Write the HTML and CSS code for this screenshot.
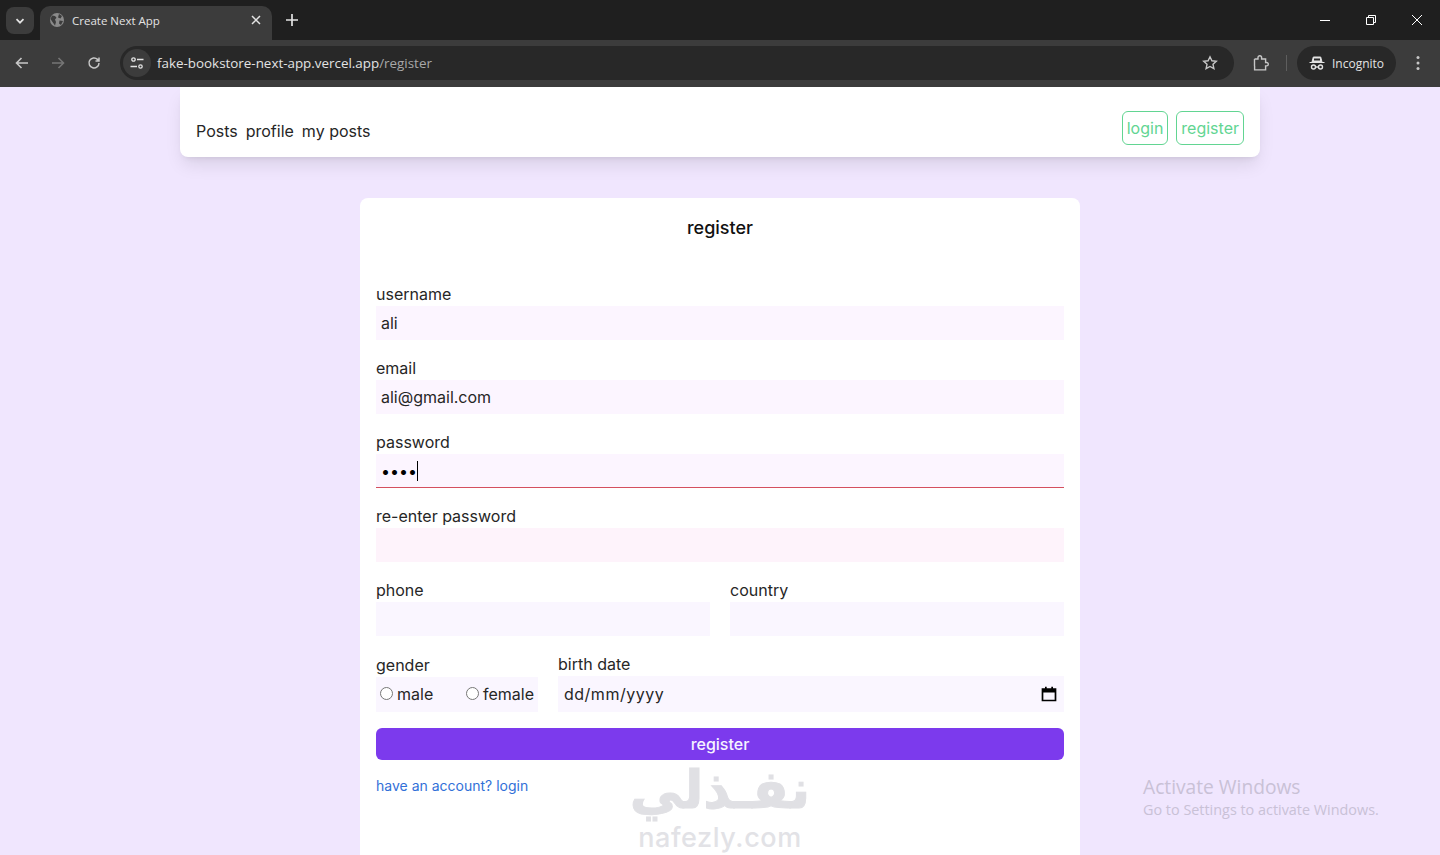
FILE: index.html
```html
<!DOCTYPE html>
<html lang="en">
<head>
  <meta charset="UTF-8">
  <meta name="viewport" content="width=device-width, initial-scale=1.0">
  <title>Create Next App</title>
  <link rel="stylesheet" href="styles.css">
</head>
<body>
  <!-- browser window top -->
  <div class="tabstrip">
    <div class="tab-search">
      <svg width="12" height="12" viewBox="0 0 12 12"><path d="M2.500 4.200 6 7.700l3.500-3.500" fill="none" stroke="#e3e3e3" stroke-width="1.700"/></svg>
    </div>
    <div class="tab">
      <svg class="tab-globe" width="16" height="16" viewBox="0 0 16 16"><circle cx="8" cy="8" r="7" fill="#8a8a8a"/><path d="M3 3.500 6 4l1.500 1.800L6 7.500 7 10l-1 3.500L3.500 10 1.500 7zM10 2l3 2-1.500 2.500-2.500-1zM10.500 8.500l3.500.5-2 4-2-1.500z" fill="#3c3c3c"/></svg>
      <span class="tab-title">Create Next App</span>
      <svg class="tab-close" width="10" height="10" viewBox="0 0 10 10"><path d="M1 1l8 8M9 1 1 9" stroke="#e3e3e3" stroke-width="1.500"/></svg>
    </div>
    <svg class="new-tab" width="14" height="14" viewBox="0 0 14 14"><path d="M7 1v12M1 7h12" stroke="#e3e3e3" stroke-width="1.700"/></svg>
    <div class="win-btns">
      <svg width="12" height="12" viewBox="0 0 12 12"><path d="M1 6.500h10" stroke="#fff" stroke-width="1"/></svg>
      <svg width="12" height="12" viewBox="0 0 12 12"><path d="M1.500 3.500h7v7h-7zM3.500 3.500v-2h7v7h-2" fill="none" stroke="#fff" stroke-width="1"/></svg>
      <svg width="12" height="12" viewBox="0 0 12 12"><path d="M1 1l10 10M11 1 1 11" stroke="#fff" stroke-width="1"/></svg>
    </div>
  </div>
  <div class="toolbar">
    <svg class="tool" width="16" height="16" viewBox="0 0 16 16"><path d="M14 8H3M7.500 3 2.500 8l5 5" fill="none" stroke="#c7c7c7" stroke-width="1.600"/></svg>
    <svg class="tool" width="16" height="16" viewBox="0 0 16 16"><path d="M2 8h11M8.500 3l5 5-5 5" fill="none" stroke="#757575" stroke-width="1.600"/></svg>
    <svg class="tool" width="16" height="16" viewBox="0 0 16 16"><path d="M13 8a5 5 0 1 1-1.500-3.600L13 6M13 2.500V6H9.500" fill="none" stroke="#c7c7c7" stroke-width="1.500"/></svg>
    <div class="omnibox">
      <div class="site-btn">
        <svg width="16" height="16" viewBox="0 0 16 16"><g fill="none" stroke="#e3e3e3" stroke-width="1.300"><circle cx="4.500" cy="4.500" r="1.700"/><circle cx="11.500" cy="11.500" r="1.700"/><path d="M8 4.500h6.500M1.500 11.500H8"/></g></svg>
      </div>
      <span class="url">fake-bookstore-next-app.vercel.app<span class="url-path">/register</span></span>
      <svg class="star" width="16" height="16" viewBox="0 0 16 16"><path d="m8 1.800 1.900 4 4.400.5-3.300 3 .9 4.400L8 11.500l-3.900 2.200.9-4.400-3.300-3 4.400-.5z" fill="none" stroke="#c7c7c7" stroke-width="1.400"/></svg>
    </div>
    <svg class="puzzle" width="18" height="18" viewBox="0 0 18 18"><path d="M2.500 5H6V3.500a1.800 1.800 0 0 1 3.600 0V5h4v3.500h1a1.700 1.700 0 0 1 0 3.400h-1v4h-11v-4" fill="none" stroke="#c7c7c7" stroke-width="1.400"/><path d="M2.500 5v7" stroke="#c7c7c7" stroke-width="1.400"/></svg>
    <div class="tool-sep"></div>
    <div class="incognito">
      <svg width="16" height="16" viewBox="0 0 16 16"><path d="M0.500 7.500h15M3 7l1.300-5h7.400L13 7z" fill="#e3e3e3" stroke="#e3e3e3" stroke-width="1"/><path d="M5 3.500h6v2H5z" fill="#282828"/><g fill="none" stroke="#e3e3e3" stroke-width="1.400"><circle cx="4.500" cy="12" r="2"/><circle cx="11.500" cy="12" r="2"/><path d="M6.500 12h3"/></g></svg>
      <span>Incognito</span>
    </div>
    <svg class="dots" width="4" height="16" viewBox="0 0 4 16"><circle cx="2" cy="2.500" r="1.500" fill="#c7c7c7"/><circle cx="2" cy="8" r="1.500" fill="#c7c7c7"/><circle cx="2" cy="13.500" r="1.500" fill="#c7c7c7"/></svg>
  </div>

  <!-- the site -->
  <div class="page">
    <nav class="navbar">
      <div class="nav-links">
        <a href="#">Posts</a>
        <a href="#">profile</a>
        <a href="#">my posts</a>
      </div>
      <div class="nav-auth">
        <a class="auth-btn" href="#">login</a>
        <a class="auth-btn" href="#">register</a>
      </div>
    </nav>

    <form class="register-card">
      <h1>register</h1>

      <div class="form-group">
        <label for="username">username</label>
        <input id="username" class="bg-fuchsia" type="text" value="ali">
      </div>
      <div class="form-group">
        <label for="email">email</label>
        <input id="email" class="bg-fuchsia" type="text" value="ali@gmail.com">
      </div>
      <div class="form-group">
        <label for="password">password</label>
        <div class="password-wrap">
          <input id="password" class="bg-fuchsia" type="password" value="1234">
          <span class="caret"></span>
        </div>
      </div>
      <div class="form-group">
        <label for="repassword">re-enter password</label>
        <input id="repassword" class="bg-pink" type="password">
      </div>

      <div class="form-row">
        <div class="form-group">
          <label for="phone">phone</label>
          <input id="phone" class="bg-purple" type="text">
        </div>
        <div class="form-group">
          <label for="country">country</label>
          <input id="country" class="bg-purple" type="text">
        </div>
      </div>

      <div class="form-row bottom-row">
        <div class="gender-col">
          <span class="gender-label">gender</span>
          <div class="gender-box">
            <label class="radio"><input type="radio" name="gender"> male</label>
            <label class="radio"><input type="radio" name="gender"> female</label>
          </div>
        </div>
        <div class="birth-col">
          <span class="birth-label">birth date</span>
          <div class="date-input">
            <span>dd/mm/yyyy</span>
            <svg width="16" height="16" viewBox="0 0 16 16"><path d="M1.500 3h13v11.500h-13z" fill="none" stroke="#000" stroke-width="1.700"/><path d="M1.500 3h13v3.500h-13zM4 .8h1.700V3H4zM10.300.8H12V3h-1.700z" fill="#000"/></svg>
          </div>
        </div>
      </div>

      <button class="submit-btn" type="button">register</button>
      <a class="login-link" href="#">have an account? login</a>
    </form>
  </div>

  <!-- things sitting on top of the picture -->
  <div class="watermark">
    <div class="watermark-ar" lang="ar" dir="rtl">نفـذلي</div>
    <div class="watermark-en">nafezly.com</div>
  </div>
  <div class="activate">
    <div class="activate-title">Activate Windows</div>
    <div class="activate-sub">Go to Settings to activate Windows.</div>
  </div>
</body>
</html>
```

FILE: styles.css
```css
* {
  box-sizing: border-box;
}
html, body {
  height: 855px;
  overflow: hidden;
}
body {
  margin: 0;
  font-family: Inter, "Liberation Sans", sans-serif;
  font-size: 16px;
  color: #1f2937;
  background-color: #f0e6fe;
}
a {
  color: inherit;
  text-decoration: none;
}

/* browser */
.tabstrip {
  height: 40px;
  background-color: #1f1f1f;
  display: flex;
  align-items: flex-end;
  font-family: "Open Sans", "Liberation Sans", sans-serif;
}
.tab-search {
  width: 28px;
  height: 27px;
  margin: 0 6px 6px 6px;
  border-radius: 8px;
  background-color: #3c3c3c;
  display: flex;
  align-items: center;
  justify-content: center;
}
.tab {
  width: 232px;
  height: 34px;
  background-color: #3c3c3c;
  border-radius: 10px 10px 0 0;
  display: flex;
  align-items: center;
  padding: 0 11px 6px 9px;
  color: #e3e3e3;
  font-size: 11.500px;
}
.tab-globe {
  margin-right: 7px;
}
.tab-title {
  flex: 1;
}
.new-tab {
  margin: 0 0 13px 13px;
}
.win-btns {
  margin-left: auto;
  display: flex;
  gap: 34px;
  padding: 0 17px 14px 0;
}
.toolbar {
  height: 47px;
  background-color: #3c3c3c;
  display: flex;
  align-items: center;
  padding: 0 14px 1px 14px;
}
.tool {
  margin-right: 20px;
}
.omnibox {
  width: 1114px;
  height: 34px;
  margin-left: -2px;
  background-color: #282828;
  border-radius: 17px;
  display: flex;
  align-items: center;
  padding: 0 16px 0 3px;
  font-family: "Open Sans", "Liberation Sans", sans-serif;
  font-size: 13.400px;
}
.site-btn {
  width: 28px;
  height: 28px;
  border-radius: 50%;
  background-color: #3c3c3c;
  display: flex;
  align-items: center;
  justify-content: center;
  margin-right: 6px;
}
.url {
  flex: 1;
  color: #e3e3e3;
}
.url-path {
  color: #a8a8a8;
}
.puzzle {
  margin-left: 18px;
}
.tool-sep {
  width: 1px;
  height: 16px;
  background-color: #5e5e5e;
  margin: 0 10px 0 16px;
}
.incognito {
  width: 99px;
  height: 34px;
  border-radius: 17px;
  background-color: #282828;
  display: flex;
  align-items: center;
  gap: 7px;
  padding-left: 12px;
  color: #e3e3e3;
  font-family: "Open Sans", "Liberation Sans", sans-serif;
  font-size: 12px;
}
.dots {
  margin-left: 20px;
}

/* site */
.page {
  width: 1080px;
  margin: 0 auto;
}
.navbar {
  height: 70px;
  background-color: #fff;
  border-radius: 0 0 8px 8px;
  box-shadow: 0 10px 18px -3px rgba(0, 0, 0, 0.1), 0 4px 6px -4px rgba(0, 0, 0, 0.1);
  display: flex;
  justify-content: space-between;
  align-items: flex-end;
  padding: 0 16px 12px 16px;
}
.nav-links {
  display: flex;
  gap: 8px;
  padding-bottom: 2px;
  line-height: 24px;
  color: #262626;
}
.nav-auth {
  display: flex;
  gap: 8px;
}
.auth-btn {
  border: 1px solid #62d592;
  border-radius: 6px;
  padding: 4px;
  color: #62d592;
  line-height: 24px;
}
.register-card {
  width: 720px;
  height: 657px;
  margin: 41px auto 0;
  padding: 16px;
  background-color: #fff;
  border-radius: 8px 8px 0 0;
}
.register-card h1 {
  margin: 0 0 42px 0;
  font-size: 18px;
  line-height: 28px;
  font-weight: 500;
  text-align: center;
  color: #111;
}
.form-group {
  margin-bottom: 18px;
}
.form-group label, .gender-label, .birth-label {
  display: block;
  line-height: 20px;
  padding-bottom: 2px;
  color: #262626;
}
.form-group input {
  display: block;
  width: 100%;
  height: 34px;
  padding: 0 5px;
  border: none;
  outline: none;
  font-family: inherit;
  font-size: 16px;
  color: #262626;
}
.bg-fuchsia {
  background-color: #fcf5ff;
}
.bg-pink {
  background-color: #fef3fb;
}
.bg-purple {
  background-color: #faf6ff;
}
.password-wrap {
  position: relative;
  border-bottom: 1px solid #d4505f;
}
.form-group .password-wrap input {
  height: 33px;
  color: #000;
}
.caret {
  position: absolute;
  left: 41px;
  top: 7px;
  width: 1px;
  height: 20px;
  background-color: #000;
}
.form-row {
  display: flex;
  gap: 20px;
}
.form-row .form-group {
  flex: 1;
}
.bottom-row {
  align-items: flex-end;
  margin-bottom: 16px;
}
.gender-col {
  width: 162px;
}
.gender-box {
  height: 35px;
  background-color: #faf6ff;
  display: flex;
  justify-content: space-between;
  align-items: center;
  padding: 0 4px 1px;
}
.radio {
  display: flex;
  align-items: center;
  color: #262626;
}
.radio input {
  margin: 0 4px 1px 0;
}
.birth-col {
  flex: 1;
}
.date-input {
  height: 36px;
  background-color: #faf6ff;
  display: flex;
  justify-content: space-between;
  align-items: center;
  padding: 0 7px 0 6px;
  color: #262626;
  letter-spacing: 0.5px;
}
.submit-btn {
  display: block;
  width: 100%;
  height: 32px;
  border: none;
  border-radius: 6px;
  background-color: #7c3aed;
  color: #f5f3ff;
  font-family: inherit;
  font-size: 16px;
  font-weight: 500;
}
.login-link {
  display: block;
  margin-top: 16px;
  font-size: 14px;
  line-height: 20px;
  color: #3270d8;
}

/* overlays */
.watermark {
  position: absolute;
  left: 600px;
  top: 762px;
  width: 240px;
  text-align: center;
  pointer-events: none;
}
.watermark-ar {
  font-family: "DejaVu Sans", sans-serif;
  font-weight: 700;
  font-size: 53px;
  line-height: 56px;
  color: #e0e0e4;
  -webkit-text-stroke: 1px #e0e0e4;
}
.watermark-en {
  font-size: 27px;
  font-weight: 500;
  line-height: 30px;
  margin-top: 5px;
  letter-spacing: 0.6px;
  color: #e2e2e6;
}
.activate {
  position: absolute;
  left: 1143px;
  top: 774px;
  font-family: "Open Sans", "Liberation Sans", sans-serif;
  color: #c9c1d6;
}
.activate-title {
  font-size: 19.200px;
  line-height: 26px;
}
.activate-sub {
  font-size: 14.400px;
  line-height: 20px;
}
```
